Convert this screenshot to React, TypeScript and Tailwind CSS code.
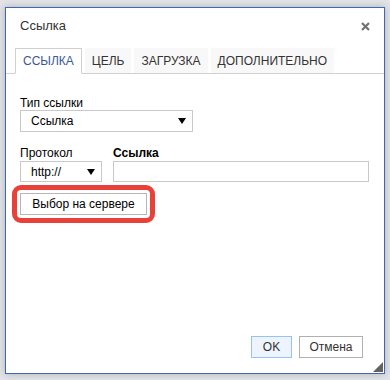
export default function App() {
  const tabs = ["ЦЕЛЬ", "ЗАГРУЗКА", "ДОПОЛНИТЕЛЬНО"];
  return (
    <div className="w-[390px] h-[380px] bg-[#e1e3e7] pt-[7px] pl-[5px] font-['Liberation_Sans',Arial,sans-serif] overflow-hidden">
      <div className="relative w-[380px] h-[367px] bg-white border border-[#3d68b4] shadow-[0_0_7px_rgba(0,0,0,0.22)] flex flex-col">
        {/* title */}
        <div className="h-[36px] flex items-center justify-between pl-[14px] pr-[14px]">
          <span className="text-[13px] text-[#333]">Ссылка</span>
          <svg width="9" height="9" viewBox="0 0 9 9">
            <path d="M1 1 L8 8 M8 1 L1 8" stroke="#727272" strokeWidth="2.2" />
          </svg>
        </div>

        {/* tabs */}
        <div className="mt-[4px] h-[26px] flex items-end gap-[3px] pl-[9px] border-b border-[#d1d1d1]">
          <div className="h-[26px] -mb-px px-[7px] flex items-center bg-white border border-[#d1d1d1] border-b-white text-[12px] text-[#3c5796]">
            ССЫЛКА
          </div>
          {tabs.map((t) => (
            <div key={t} className="h-[25px] px-[7px] flex items-center bg-[#f8f8f8] text-[12px] text-[#333]">
              {t}
            </div>
          ))}
        </div>

        {/* content */}
        <div className="flex-1 pl-[14px] pt-[22px] text-[12px] text-black">
          <div className="leading-[14px]">Тип ссылки</div>
          <div className="w-[173px] h-[22px] border border-[#c9c9c9] flex items-center justify-between pl-[10px] pr-[6px]">
            <span>Ссылка</span>
            <svg width="8" height="6" viewBox="0 0 8 6">
              <path d="M0 0 H8 L4 6 Z" fill="#000" />
            </svg>
          </div>

          <div className="mt-[14px] flex gap-[11px]">
            <div>
              <div className="leading-[14px]">Протокол</div>
              <div className="mt-[1px] w-[82px] h-[21px] border border-[#c9c9c9] flex items-center justify-between pl-[10px] pr-[6px]">
                <span>http://</span>
                <svg width="8" height="6" viewBox="0 0 8 6">
                  <path d="M0 0 H8 L4 6 Z" fill="#000" />
                </svg>
              </div>
            </div>
            <div>
              <div className="leading-[14px] font-bold">Ссылка</div>
              <div className="mt-[1px] w-[256px] h-[21px] border border-[#c9c9c9]" />
            </div>
          </div>

          <div className="mt-[11px] relative w-[127px]">
            <div className="h-[22px] border border-[#b6b6b6] bg-white flex items-center justify-center">
              Выбор на сервере
            </div>
            <div className="absolute -inset-[8px] border-[5px] border-[#e8413a] rounded-[9px]" />
          </div>
        </div>

        {/* footer */}
        <div className="flex justify-end gap-[7px] pr-[21px] pb-[15px] text-[12px] text-[#333]">
          <div className="w-[41px] h-[22px] bg-[#edf4fe] border border-[#97c1f7] flex items-center justify-center">
            OK
          </div>
          <div className="w-[64px] h-[22px] bg-white border border-[#b0b0b0] flex items-center justify-center">
            Отмена
          </div>
        </div>

        <svg className="absolute right-[1px] bottom-[1px]" width="10" height="10" viewBox="0 0 10 10">
          <path d="M10 0 V10 H0 Z" fill="#626262" />
        </svg>
      </div>
    </div>
  );
}
